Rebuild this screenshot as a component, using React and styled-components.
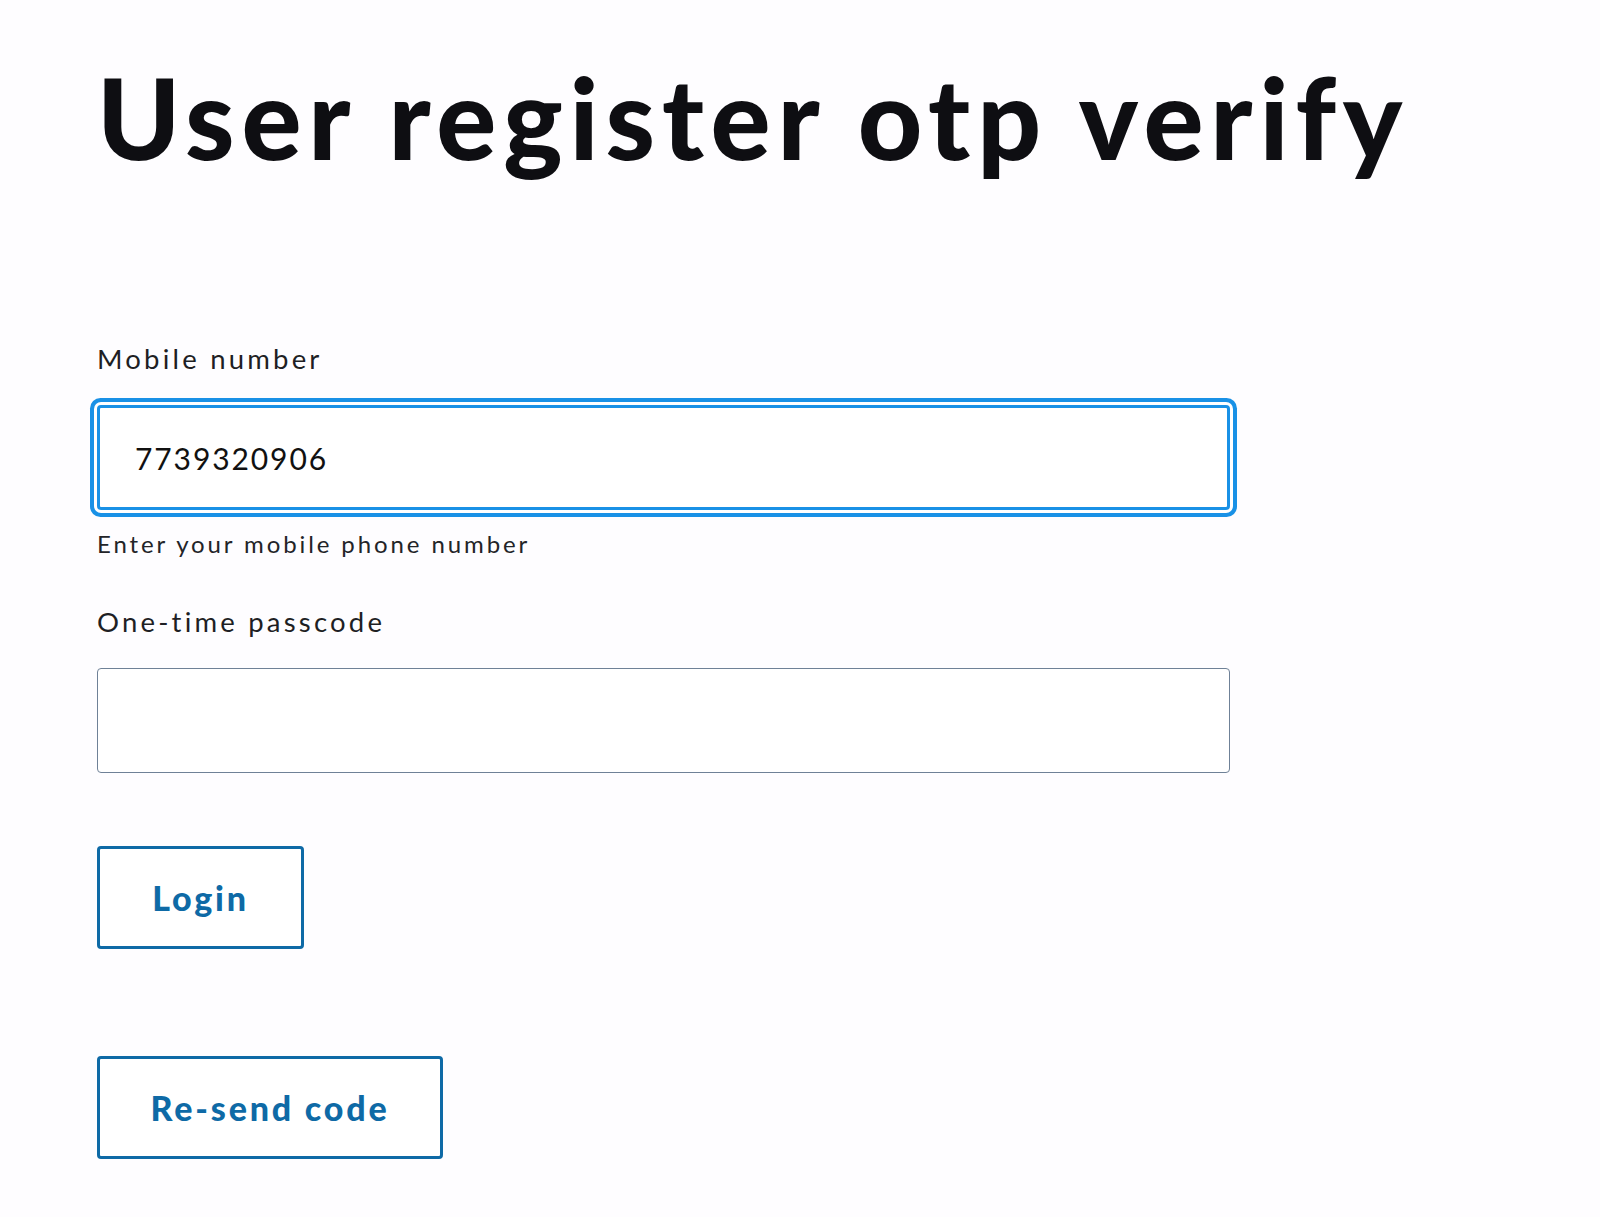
import React from "react";
import styled, { createGlobalStyle } from "styled-components";

const Global = createGlobalStyle`
  html, body { margin: 0; padding: 0; background: #fefdff; }
  body { font-family: "Lato", "Open Sans", sans-serif; color: #1c1c1f; }
  * { box-sizing: border-box; }
`;

const Page = styled.main`
  padding: 52px 0 60px 97px;
  display: flex;
  flex-direction: column;
  align-items: flex-start;
`;

const Title = styled.h1`
  margin: 0;
  font-family: "Lato", sans-serif;
  font-weight: 900;
  font-size: 112px;
  line-height: 130px;
  color: #0e0e12;
  letter-spacing: 6.85px;
`;

const Form = styled.form`
  margin-top: 160px;
  display: flex;
  flex-direction: column;
  align-items: flex-start;
`;

const Field = styled.div`
  display: flex;
  flex-direction: column;
  align-items: flex-start;
  margin-bottom: ${(p) => p.$mb || 0}px;
`;

const Label = styled.label`
  font-size: 27.5px;
  line-height: 34px;
  letter-spacing: 3.2px;
  color: #1e1f24;
  margin-bottom: 29px;
`;

const InputBox = styled.input`
  width: 1133px;
  height: 105px;
  border: ${(p) => (p.$focused ? "3px solid #1991e6" : "1.5px solid #6f8197")};
  border-radius: 4px;
  background: #fff;
  padding: 0 0 0 ${(p) => (p.$focused ? 35 : 38)}px;
  font-family: "Lato", sans-serif;
  font-size: 30px;
  letter-spacing: 1.9px;
  color: #111;
  outline: none;
  box-shadow: ${(p) => (p.$focused ? "0 0 0 3px #fff, 0 0 0 7px #1991e6" : "none")};
`;

const Hint = styled.p`
  margin: 19px 0 0;
  font-size: 24px;
  line-height: 30px;
  letter-spacing: 2.9px;
  color: #232428;
`;

const Button = styled.button`
  width: ${(p) => p.$w}px;
  height: 103px;
  margin-top: ${(p) => p.$mt}px;
  border: 3px solid #0e6aa6;
  border-radius: 4px;
  background: #fff;
  color: #0e6aa6;
  font-family: "Lato", sans-serif;
  font-weight: 900;
  font-size: 34px;
  letter-spacing: 2.8px;
  cursor: pointer;
`;

export default function App() {
  return (
    <>
      <Global />
      <Page>
        <Title>User register otp verify</Title>
        <Form onSubmit={(e) => e.preventDefault()}>
          <Field $mb={46}>
            <Label htmlFor="mobile">Mobile number</Label>
            <InputBox id="mobile" $focused defaultValue="7739320906" />
            <Hint>Enter your mobile phone number</Hint>
          </Field>
          <Field>
            <Label htmlFor="otp">One-time passcode</Label>
            <InputBox id="otp" />
          </Field>
          <Button type="submit" $w={207} $mt={73}>Login</Button>
          <Button type="button" $w={346} $mt={107}>Re-send code</Button>
        </Form>
      </Page>
    </>
  );
}
